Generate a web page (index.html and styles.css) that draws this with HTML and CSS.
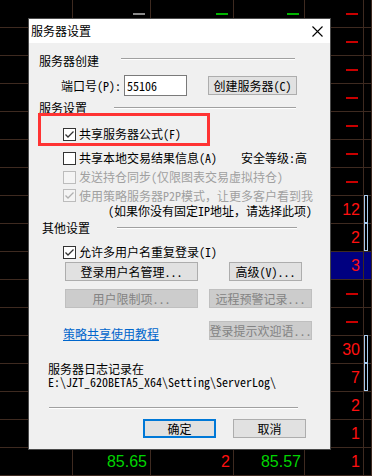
FILE: index.html
```html
<!DOCTYPE html>
<html>
<head>
<meta charset="utf-8">
<link rel="stylesheet" href="styles.css">
</head>
<body>
<div class="board">
  <div class="row"><span></span><span><i class="dash grey"></i></span><span><i class="dash green"></i></span><span><i class="dash green"></i></span><span><i class="dash red"></i></span><span></span></div>
  <div class="row"><span></span><span></span><span></span><span></span><span><i class="dash red"></i></span><span></span></div>
  <div class="row"><span></span><span></span><span></span><span></span><span><i class="dash red"></i></span><span></span></div>
  <div class="row"><span></span><span></span><span></span><span></span><span><i class="dash red"></i></span><span></span></div>
  <div class="row"><span></span><span></span><span></span><span></span><span><i class="dash red"></i></span><span></span></div>
  <div class="row"><span></span><span></span><span></span><span></span><span><i class="dash red"></i></span><span></span></div>
  <div class="row"><span></span><span></span><span></span><span></span><span><i class="dash red"></i></span><span></span></div>
  <div class="row"><span></span><span></span><span></span><span></span><span class="num red">12</span><span><b class="mini"></b></span></div>
  <div class="row"><span></span><span></span><span></span><span></span><span class="num red">2</span><span><b class="mini"></b></span></div>
  <div class="row sel"><span></span><span></span><span></span><span></span><span class="num red">3</span><span></span></div>
  <div class="row"><span></span><span></span><span></span><span></span><span><i class="dash red"></i></span><span></span></div>
  <div class="row"><span></span><span></span><span></span><span></span><span><i class="dash red"></i></span><span></span></div>
  <div class="row"><span></span><span></span><span></span><span></span><span class="num red">30</span><span><b class="mini"></b></span></div>
  <div class="row"><span></span><span></span><span></span><span></span><span class="num red">7</span><span><b class="mini"></b></span></div>
  <div class="row"><span></span><span></span><span></span><span></span><span class="num red">2</span><span></span></div>
  <div class="row"><span></span><span></span><span></span><span></span><span class="num red">1</span><span></span></div>
  <div class="row"><span></span><span class="num green">85.65</span><span class="num red">2</span><span class="num green">85.57</span><span class="num red">1</span><span></span></div>
</div>

<div class="dialog">
  <div class="titlebar">
    <span class="title">服务器设置</span>
    <svg class="close" width="11" height="11" viewBox="0 0 11 11"><path d="M0.5 0.5 L10.5 10.5 M10.5 0.5 L0.5 10.5" stroke="#000" stroke-width="1.1" fill="none"/></svg>
  </div>
  <div class="body">
    <div class="group g1"><span>服务器创建</span><i class="rule"></i></div>
    <div class="port-row">
      <span class="port-lbl">端口号(P):</span>
      <span class="input">55106</span>
      <span class="btn btn-create">创建服务器(C)</span>
    </div>
    <div class="group g2"><span>服务设置</span><i class="rule"></i></div>

    <div class="chk c1"><span class="box"><svg width="11" height="11" viewBox="0 0 11 11"><path d="M1.5 5.5 L4 8 L9.5 2.5" stroke="#333" stroke-width="1.3" fill="none"/></svg></span><span class="chk-text">共享服务器公式(F)</span></div>
    <div class="chk-row c2"><div class="chk chk-wide"><span class="box"></span><span class="chk-text">共享本地交易结果信息(A)</span></div><span class="level">安全等级:高</span></div>
    <div class="chk c3 disabled"><span class="box"></span><span class="chk-text">发送持仓同步(仅限图表交易虚拟持仓)</span></div>
    <div class="chk c4 disabled"><span class="box"><svg width="11" height="11" viewBox="0 0 11 11"><path d="M1.5 5.5 L4 8 L9.5 2.5" stroke="#b0b0b0" stroke-width="1.3" fill="none"/></svg></span><span class="chk-text">使用策略服务器P2P模式，让更多客户看到我</span></div>
    <div class="note">(如果你没有固定IP地址，请选择此项)</div>

    <div class="group g3"><span>其他设置</span><i class="rule"></i></div>
    <div class="chk c5"><span class="box"><svg width="11" height="11" viewBox="0 0 11 11"><path d="M1.5 5.5 L4 8 L9.5 2.5" stroke="#333" stroke-width="1.3" fill="none"/></svg></span><span class="chk-text">允许多用户名重复登录(I)</span></div>

    <div class="btn-row r1"><span class="btn w133">登录用户名管理...</span><span class="btn w73 gap31">高级(V)...</span></div>
    <div class="btn-row r2"><span class="btn w133 off">用户限制项...</span><span class="btn w103 gap11 off">远程预警记录...</span></div>
    <div class="btn-row r3"><a class="link">策略共享使用教程</a><span class="btn w103 off">登录提示欢迎语...</span></div>

    <div class="log">
      <div class="log-head">服务器日志记录在</div>
      <div class="path">E:\JZT_620BETA5_X64\Setting\ServerLog\</div>
    </div>
    <i class="sep"></i>
    <div class="btn-row r4"><span class="btn w73 default">确定</span><span class="btn w73 gap17">取消</span></div>
  </div>
  <div class="highlight"></div>
</div>
</body>
</html>
```
FILE: styles.css
```css
* { box-sizing: border-box; }

body {
  margin: 0;
  width: 372px;
  height: 476px;
  overflow: hidden;
  position: relative;
  background: #000;
  font-family: "Noto Sans Mono CJK SC", "Noto Sans CJK SC", sans-serif;
}

/* background quote table */
.board { display: block; }
.row {
  display: grid;
  grid-template-columns: 73px 78px 83px 71px 59px 1fr;
  height: 28px;
}
.row > span {
  border-right: 1px solid #3e2a20;
  border-bottom: 1px solid #3e2a20;
  display: flex;
  align-items: center;
  justify-content: flex-end;
  padding-right: 3px;
  font-family: "Liberation Sans", Arial, sans-serif;
  font-size: 16px;
}
.row.sel > span:nth-child(5),
.row.sel > span:nth-child(6) { background: #000080; }
.num.red { color: #ff1010; }
.num.green { color: #00d400; }
.dash { display: block; width: 12px; height: 2px; margin-right: 2px; }
.dash.red { background: #c80000; }
.dash.green { background: #00b400; }
.dash.grey { background: #8a8a8a; }
.mini {
  display: block;
  align-self: flex-start;
  margin: -1px 0 0 -1px;
  width: 100%;
  height: 28px;
  border: 1px solid #a8cbee;
}

/* dialog */
.dialog {
  position: absolute;
  left: 28px;
  top: 18px;
  width: 303px;
  height: 432px;
  border: 1px solid #4a4a4a;
  background: #f0f0f0;
  font-size: 12px;
  color: #000;
}
.titlebar {
  height: 24px;
  background: #fff;
  display: flex;
  align-items: center;
  padding-left: 2px;
  line-height: 14px;
}
.close { margin-left: auto; margin-right: 7px; }

.body { padding: 11px 0 0 10px; line-height: 14px; }

.group {
  display: grid;
  align-items: center;
  height: 14px;
}
.g1 { grid-template-columns: 82px 174px; }
.g2 { grid-template-columns: 75px 182px; margin-top: 5px; }
.g3 { grid-template-columns: 75px 180px; margin-top: 4px; margin-left: 3px; }
.rule {
  display: block;
  height: 2px;
  border-top: 1px solid #a0a0a0;
  border-bottom: 1px solid #fff;
}
.g1 .rule { margin-top: -4px; }

.port-row {
  display: flex;
  align-items: center;
  height: 21px;
  margin-top: 7px;
  margin-left: 22px;
}
.port-lbl { width: 63px; flex: none; }
.input {
  width: 63px;
  height: 21px;
  border: 1px solid #7a7a7a;
  background: #fff;
  padding-left: 2px;
  display: flex;
  align-items: center;
  flex: none;
}
.btn {
  height: 19px;
  border: 1px solid #adadad;
  background: #e1e1e1;
  display: flex;
  align-items: center;
  justify-content: center;
  flex: none;
  white-space: nowrap;
}
.btn-create { width: 89px; margin-left: 21px; }
.btn.off { background: #cccccc; border-color: #bfbfbf; color: #838383; }
.btn.default { border: 2px solid #0078d7; }

.chk {
  display: flex;
  align-items: center;
  height: 14px;
  margin-left: 24px;
}
.box {
  width: 13px;
  height: 13px;
  border: 1px solid #333;
  background: #fff;
  flex: none;
  display: block;
}
.box svg { display: block; }
.chk-text { margin-left: 3px; white-space: nowrap; }
.chk.disabled { color: #a0a0a0; }
.chk.disabled .box { border-color: #bcbcbc; background: #f4f4f4; }

.c1 { margin-top: 12px; }
.chk-row {
  display: flex;
  align-items: center;
  height: 14px;
  margin-top: 10px;
}
.chk-row .chk-wide { width: 178px; flex: none; }
.level { white-space: nowrap; flex: none; }
.c3 { margin-top: 5px; }
.c4 { margin-top: 5px; height: 13px; }
.note { margin-top: 2px; margin-left: 69px; height: 13px; line-height: 13px; white-space: nowrap; }
.c5 { margin-top: 10px; }

.btn-row { display: flex; align-items: flex-start; height: 19px; }
.r1 { margin-top: 3px; margin-left: 26px; }
.r2 { margin-top: 8px; margin-left: 26px; }
.r3 { margin-top: 13px; margin-left: 24px; }
.r4 { margin-top: 10px; margin-left: 104px; }
.w133 { width: 133px; }
.w103 { width: 103px; }
.w73 { width: 73px; }
.gap31 { margin-left: 31px; }
.gap11 { margin-left: 11px; }
.gap17 { margin-left: 17px; }

.link {
  width: 146px;
  flex: none;
  color: #0066cc;
  text-decoration: underline;
  margin-top: 6px;
}

.log { margin-top: 22px; margin-left: 9px; }
.log-head { line-height: 13px; height: 13px; }
.path { white-space: nowrap; line-height: 12px; height: 12px; margin-top: 1px; }

.sep {
  display: block;
  width: 249px;
  height: 2px;
  margin-top: 19px;
  margin-left: 10px;
  border-top: 1px solid #a0a0a0;
  border-bottom: 1px solid #fff;
}

.highlight {
  position: absolute;
  left: 9px;
  top: 94px;
  width: 172px;
  height: 33px;
  border: 3px solid #ff3333;
}
```
